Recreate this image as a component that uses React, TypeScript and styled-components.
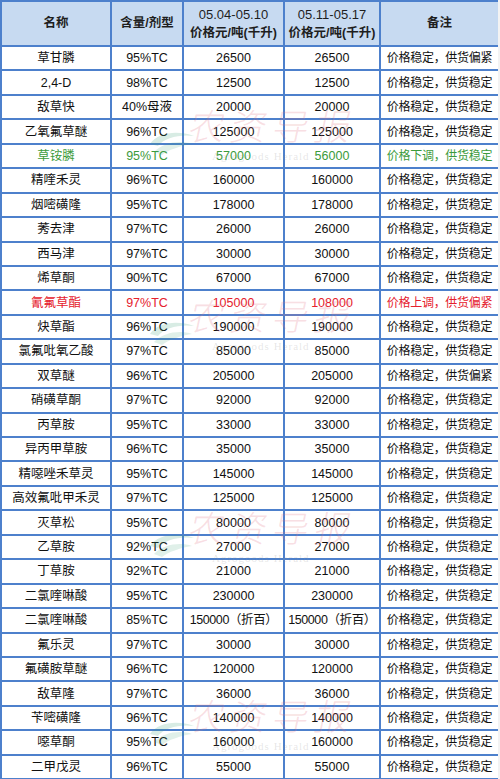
import { createGlobalStyle } from "styled-components";
import styled from "styled-components";

const GlobalStyle = createGlobalStyle`
  html, body {
    margin: 0;
    padding: 0;
    background: #f3f3f3;
  }
  body {
    font-family: "Liberation Sans", "Noto Sans CJK SC", sans-serif;
  }
`;

const Wrap = styled.div`
  position: relative;
  width: 498px;
  overflow: hidden;
`;

const Table = styled.table`
  width: 498px;
  border-collapse: collapse;
  table-layout: fixed;
  background: #fff;
  font-size: 12.5px;
  color: #111;
`;

const HeadCell = styled.th`
  height: 43px;
  padding: 0;
  background: #c7daf1;
  border: 2px solid #4d80cc;
  font-weight: 700;
  font-size: 12.5px;
  line-height: 19px;
  text-align: center;
  color: #1e1e1e;
  white-space: nowrap;
`;

const DateLine = styled.div`
  font-weight: 400;
  font-size: 13px;
`;

const Row = styled.tr<{ $tone?: "up" | "down" }>`
  height: 24.45px;
  color: ${({ $tone }) =>
    $tone === "up" ? "#e5212d" : $tone === "down" ? "#3c9b3c" : "#111"};
`;

const Cell = styled.td<{ $note?: boolean; $tight?: boolean }>`
  padding: 0;
  border: 2px solid #4d80cc;
  text-align: center;
  white-space: nowrap;
  line-height: 20px;
  font-size: ${({ $note }) => ($note ? "12px" : "inherit")};
  letter-spacing: ${({ $note, $tight }) =>
    $note ? "-0.3px" : $tight ? "-0.4px" : "normal"};
`;

const Mark = styled.div<{ $top: number }>`
  position: absolute;
  left: 120px;
  top: ${({ $top }) => $top}px;
  width: 240px;
  height: 70px;
  pointer-events: none;
`;

const MarkTitle = styled.div`
  position: absolute;
  left: 70px;
  top: 0;
  font-family: "Noto Sans CJK SC", sans-serif;
  font-weight: 300;
  font-size: 36px;
  letter-spacing: 6px;
  color: rgba(226, 110, 130, 0.22);
  transform: skewX(-12deg);
  white-space: nowrap;
`;

const MarkSub = styled.div`
  position: absolute;
  left: 92px;
  top: 52px;
  font-family: "Liberation Serif", serif;
  font-size: 11px;
  letter-spacing: 1px;
  color: rgba(140, 140, 140, 0.22);
  white-space: nowrap;
`;

const MarkLogo = styled.svg`
  position: absolute;
  left: 28px;
  top: 30px;
`;

type Item = {
  name: string;
  spec: string;
  p1: string;
  p2: string;
  note: string;
  tone?: "up" | "down";
};

const stable = "价格稳定，供货稳定";
const tight = "价格稳定，供货偏紧";

const items: Item[] = [
  { name: "草甘膦", spec: "95%TC", p1: "26500", p2: "26500", note: tight },
  { name: "2,4-D", spec: "98%TC", p1: "12500", p2: "12500", note: stable },
  { name: "敌草快", spec: "40%母液", p1: "20000", p2: "20000", note: stable },
  { name: "乙氧氟草醚", spec: "96%TC", p1: "125000", p2: "125000", note: stable },
  { name: "草铵膦", spec: "95%TC", p1: "57000", p2: "56000", note: "价格下调，供货稳定", tone: "down" },
  { name: "精喹禾灵", spec: "96%TC", p1: "160000", p2: "160000", note: stable },
  { name: "烟嘧磺隆", spec: "95%TC", p1: "178000", p2: "178000", note: stable },
  { name: "莠去津", spec: "97%TC", p1: "26000", p2: "26000", note: stable },
  { name: "西马津", spec: "97%TC", p1: "30000", p2: "30000", note: stable },
  { name: "烯草酮", spec: "90%TC", p1: "67000", p2: "67000", note: stable },
  { name: "氰氟草酯", spec: "97%TC", p1: "105000", p2: "108000", note: "价格上调，供货偏紧", tone: "up" },
  { name: "炔草酯", spec: "96%TC", p1: "190000", p2: "190000", note: stable },
  { name: "氯氟吡氧乙酸", spec: "97%TC", p1: "85000", p2: "85000", note: stable },
  { name: "双草醚", spec: "96%TC", p1: "205000", p2: "205000", note: tight },
  { name: "硝磺草酮", spec: "97%TC", p1: "92000", p2: "92000", note: stable },
  { name: "丙草胺", spec: "95%TC", p1: "33000", p2: "33000", note: stable },
  { name: "异丙甲草胺", spec: "96%TC", p1: "35000", p2: "35000", note: stable },
  { name: "精噁唑禾草灵", spec: "95%TC", p1: "145000", p2: "145000", note: stable },
  { name: "高效氟吡甲禾灵", spec: "97%TC", p1: "125000", p2: "125000", note: stable },
  { name: "灭草松", spec: "95%TC", p1: "80000", p2: "80000", note: stable },
  { name: "乙草胺", spec: "92%TC", p1: "27000", p2: "27000", note: stable },
  { name: "丁草胺", spec: "92%TC", p1: "21000", p2: "21000", note: stable },
  { name: "二氯喹啉酸", spec: "95%TC", p1: "230000", p2: "230000", note: stable },
  { name: "二氯喹啉酸", spec: "85%TC", p1: "150000（折百）", p2: "150000（折百）", note: stable },
  { name: "氟乐灵", spec: "97%TC", p1: "30000", p2: "30000", note: stable },
  { name: "氟磺胺草醚", spec: "96%TC", p1: "120000", p2: "120000", note: stable },
  { name: "敌草隆", spec: "97%TC", p1: "36000", p2: "36000", note: stable },
  { name: "苄嘧磺隆", spec: "96%TC", p1: "140000", p2: "140000", note: stable },
  { name: "噁草酮", spec: "95%TC", p1: "160000", p2: "160000", note: stable },
  { name: "二甲戊灵", spec: "96%TC", p1: "55000", p2: "55000", note: stable },
];

const marks = [98, 288, 500, 688];

const Watermark = ({ top }: { top: number }) => (
  <Mark $top={top}>
    <MarkLogo width="50" height="28" viewBox="0 0 50 28">
      <path
        d="M2 16 C10 4, 30 2, 46 8 C32 6, 16 10, 10 18 Z"
        fill="rgba(60,160,120,0.2)"
      />
      <path
        d="M6 24 C16 14, 32 12, 44 16 C32 18, 20 22, 14 27 Z"
        fill="rgba(60,160,120,0.16)"
      />
    </MarkLogo>
    <MarkTitle>农资导报</MarkTitle>
    <MarkSub>Agrogoods Herald</MarkSub>
  </Mark>
);

export default function App() {
  return (
    <Wrap>
      <GlobalStyle />
      <Table>
        <colgroup>
          <col style={{ width: 110 }} />
          <col style={{ width: 72 }} />
          <col style={{ width: 101 }} />
          <col style={{ width: 96 }} />
          <col style={{ width: 119 }} />
        </colgroup>
        <thead>
          <tr>
            <HeadCell>名称</HeadCell>
            <HeadCell>含量/剂型</HeadCell>
            <HeadCell>
              <DateLine>05.04-05.10</DateLine>
              价格元/吨(千升)
            </HeadCell>
            <HeadCell>
              <DateLine>05.11-05.17</DateLine>
              价格元/吨(千升)
            </HeadCell>
            <HeadCell>备注</HeadCell>
          </tr>
        </thead>
        <tbody>
          {items.map((it, i) => {
            const long = it.p1.length > 7;
            return (
              <Row key={i} $tone={it.tone}>
                <Cell>{it.name}</Cell>
                <Cell>{it.spec}</Cell>
                <Cell $tight={long}>{it.p1}</Cell>
                <Cell $tight={long}>{it.p2}</Cell>
                <Cell $note>{it.note}</Cell>
              </Row>
            );
          })}
        </tbody>
      </Table>
      {marks.map((t) => (
        <Watermark key={t} top={t} />
      ))}
    </Wrap>
  );
}
